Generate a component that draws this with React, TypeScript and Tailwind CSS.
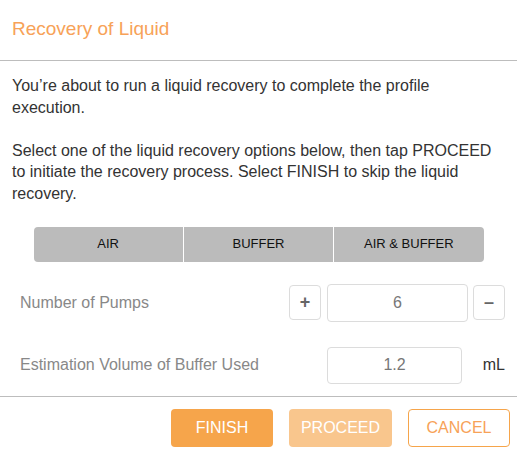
import { useState } from 'react';

const options = ['AIR', 'BUFFER', 'AIR & BUFFER'];

export default function App() {
  const [pumps, setPumps] = useState(6);
  const [selected, setSelected] = useState<string | null>(null);

  return (
    <div className="w-[517px] h-[459px] bg-white font-['Liberation_Sans',Arial,sans-serif] flex flex-col">
      {/* Header */}
      <header className="h-[61px] border-b border-[#bdbdbd] px-[12px] flex items-center pb-[2px]">
        <h1 className="text-[19px] text-[#f7a258]">Recovery of Liquid</h1>
      </header>

      {/* Body */}
      <main className="flex-1 px-[12px] pt-[14px]">
        <p className="text-[16px] leading-[21.6px] text-[#333]">
          You’re about to run a liquid recovery to complete the profile execution.
          <br />
          <br />
          Select one of the liquid recovery options below, then tap PROCEED to initiate the
          recovery process. Select FINISH to skip the liquid recovery.
        </p>

        <div className="mt-[22px] mx-auto w-[450px] h-[35px] flex rounded-[4px] overflow-hidden bg-[#bbbbbb]">
          {options.map((o, i) => (
            <button
              key={o}
              onClick={() => setSelected(o)}
              className={
                'flex-1 text-[13px] text-[#111] flex items-center justify-center ' +
                (i > 0 ? 'border-l border-white ' : '') +
                (selected === o ? 'bg-[#a8a8a8]' : '')
              }
            >
              {o}
            </button>
          ))}
        </div>

        <div className="mt-[22px] flex items-center pl-[8px]">
          <span className="flex-1 text-[16px] text-[#888]">Number of Pumps</span>
          <button
            onClick={() => setPumps(pumps + 1)}
            className="w-[32px] h-[35px] border border-[#dcdcdc] rounded-[4px] text-[18px] font-bold text-[#666] flex items-center justify-center"
          >
            +
          </button>
          <div className="ml-[6px] w-[141px] h-[38px] border border-[#dcdcdc] rounded-[4px] flex items-center justify-center text-[16px] text-[#777]">
            {pumps}
          </div>
          <button
            onClick={() => setPumps(Math.max(0, pumps - 1))}
            className="ml-[5px] w-[32px] h-[35px] border border-[#dcdcdc] rounded-[4px] text-[18px] font-bold text-[#666] flex items-center justify-center"
          >
            –
          </button>
        </div>

        <div className="mt-[25px] flex items-center pl-[8px]">
          <span className="flex-1 text-[16px] text-[#888]">Estimation Volume of Buffer Used</span>
          <div className="w-[135px] h-[37px] border border-[#dcdcdc] rounded-[4px] flex items-center justify-center text-[16px] text-[#777]">
            1.2
          </div>
          <span className="w-[43px] text-right text-[16px] text-[#333]">mL</span>
        </div>
      </main>

      {/* Footer */}
      <footer className="h-[63px] border-t border-[#bdbdbd] flex items-start justify-end gap-[16px] pt-[12px] pr-[7px]">
        <button className="w-[102px] h-[38px] rounded-[4px] bg-[#f6a54b] text-white text-[16px]">
          FINISH
        </button>
        <button className="w-[103px] h-[38px] rounded-[4px] bg-[#f9c68d] text-white text-[16px]">
          PROCEED
        </button>
        <button className="w-[102px] h-[38px] rounded-[4px] border border-[#f6a54b] bg-white text-[#f7a258] text-[16px]">
          CANCEL
        </button>
      </footer>
    </div>
  );
}
